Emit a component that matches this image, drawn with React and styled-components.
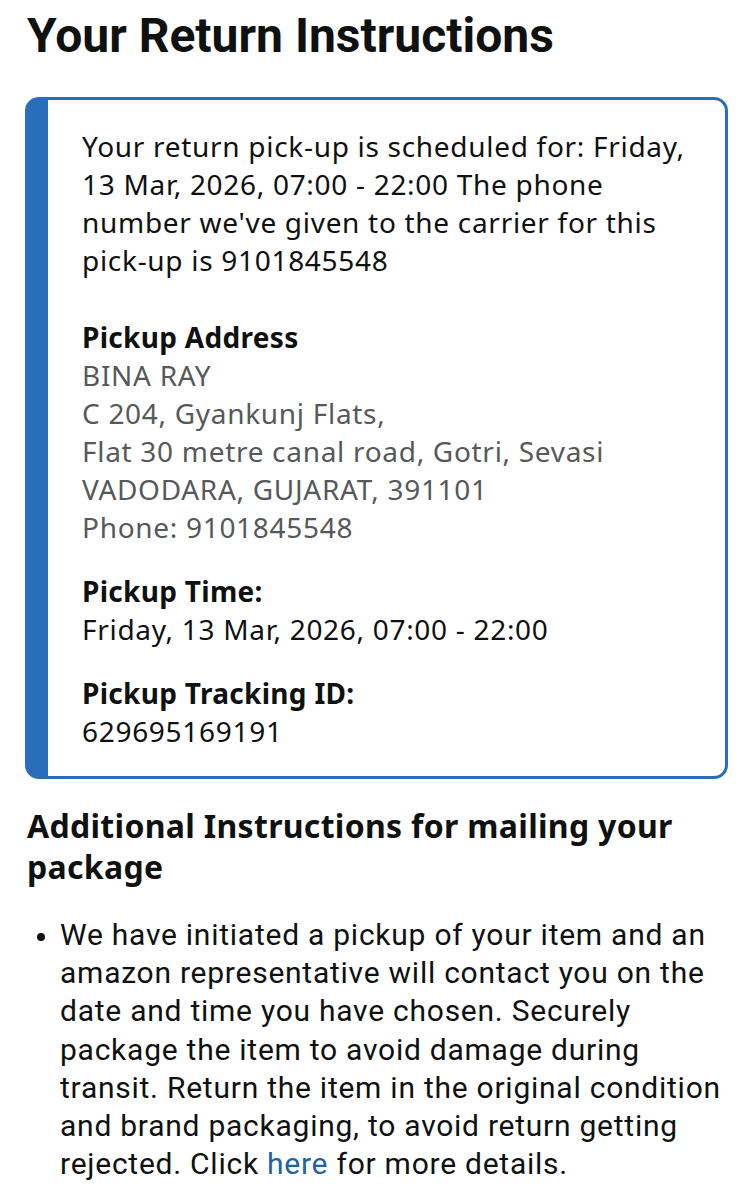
import React from "react";
import styled, { createGlobalStyle } from "styled-components";

const GlobalStyle = createGlobalStyle`
  html, body { margin: 0; padding: 0; background: #ffffff; }
  body { color: #0f1111; -webkit-font-smoothing: antialiased; }
`;

const Page = styled.main`
  padding: 8px 18px 40px 27px;
  font-family: "Noto Sans", "Open Sans", sans-serif;
`;

const Title = styled.h1`
  margin: 0;
  font-family: Roboto, "Noto Sans", sans-serif;
  font-size: 48px;
  line-height: 56px;
  font-weight: 700;
  color: #0f1111;
`;

const Card = styled.section`
  margin: 33px 8px 0 -2px;
  border: 3px solid #2a6ebb;
  border-left-width: 23px;
  border-radius: 14px;
  padding: 27px 22px 26px 34px;
  font-size: 28px;
  line-height: 38px;
  letter-spacing: 0.7px;
`;

const Lead = styled.p`
  margin: 0 0 39px;
  color: #0f1111;
`;

const Block = styled.div`
  & + & { margin-top: 26px; }
`;

const Label = styled.div`
  font-weight: 700;
  letter-spacing: 0.3px;
  color: #0f1111;
`;

const Value = styled.div`
  color: ${p => (p.muted ? "#565959" : "#0f1111")};
`;

const SubTitle = styled.h2`
  margin: 26px 0 0;
  font-size: 32px;
  line-height: 41px;
  font-weight: 700;
  letter-spacing: 0.3px;
  color: #0f1111;
`;

const List = styled.ul`
  margin: 29px 0 0;
  padding: 0 0 0 33px;
  font-family: Roboto, "Noto Sans", sans-serif;
  font-size: 30px;
  line-height: 38.2px;
  letter-spacing: 0.75px;
  color: #0f1111;
`;

const Item = styled.li`
  &::marker { font-size: 26px; }
`;

const Link = styled.a`
  color: #2162a1;
  text-decoration: none;
`;

export default function App() {
  return (
    <>
      <GlobalStyle />
      <Page>
        <Title>Your Return Instructions</Title>
        <Card>
          <Lead>
            Your return pick-up is scheduled for: Friday, 13 Mar, 2026, 07:00 - 22:00 The phone
            number we've given to the carrier for this pick-up is 9101845548
          </Lead>
          <Block>
            <Label>Pickup Address</Label>
            <Value muted>BINA RAY</Value>
            <Value muted>C 204, Gyankunj Flats,</Value>
            <Value muted>Flat 30 metre canal road, Gotri, Sevasi</Value>
            <Value muted>VADODARA, GUJARAT, 391101</Value>
            <Value muted>Phone: 9101845548</Value>
          </Block>
          <Block>
            <Label>Pickup Time:</Label>
            <Value>Friday, 13 Mar, 2026, 07:00 - 22:00</Value>
          </Block>
          <Block>
            <Label>Pickup Tracking ID:</Label>
            <Value>629695169191</Value>
          </Block>
        </Card>
        <SubTitle>Additional Instructions for mailing your package</SubTitle>
        <List>
          <Item>
            We have initiated a pickup of your item and an amazon representative will contact you
            on the date and time you have chosen. Securely package the item to avoid damage during
            transit. Return the item in the original condition and brand packaging, to avoid return
            getting rejected. Click <Link href="#">here</Link> for more details.
          </Item>
        </List>
      </Page>
    </>
  );
}
